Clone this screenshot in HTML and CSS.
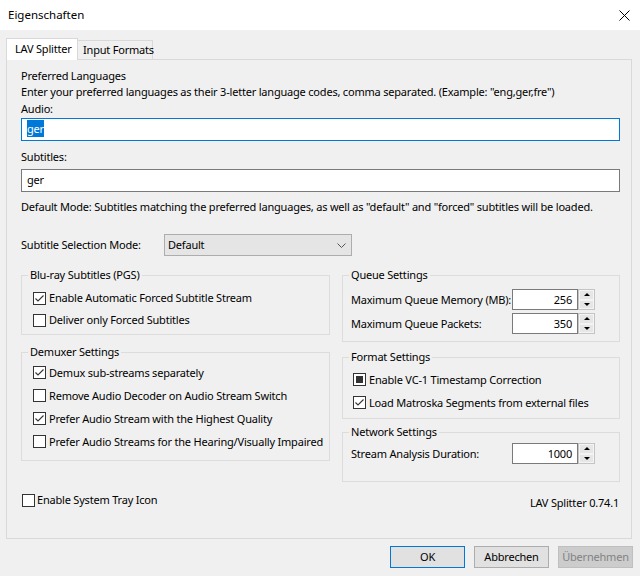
FILE: index.html
```html
<!DOCTYPE html>
<html>
<head>
<meta charset="utf-8">
<title>Eigenschaften</title>
<link rel="stylesheet" href="styles.css">
</head>
<body>
<div class="window">
  <div class="titlebar">
    <span class="title">Eigenschaften</span>
    <svg class="close" width="11" height="11" viewBox="0 0 11 11"><path d="M0.5 0.5 L10.5 10.5 M10.5 0.5 L0.5 10.5" stroke="#000" stroke-width="1" fill="none"/></svg>
  </div>
  <div class="client">
    <div class="tabs">
      <div class="tab active">LAV Splitter</div>
      <div class="tab">Input Formats</div>
    </div>
    <div class="panel">
      <div class="line">Preferred Languages</div>
      <div class="line">Enter your preferred languages as their 3-letter language codes, comma separated. (Example: "eng,ger,fre")</div>
      <div class="line lbl-audio">Audio:</div>
      <div class="edit focus"><span class="sel">ger</span></div>
      <div class="line lbl-sub">Subtitles:</div>
      <div class="edit sub">ger</div>
      <div class="line note">Default Mode: Subtitles matching the preferred languages, as well as "default" and "forced" subtitles will be loaded.</div>
      <div class="mode-row">
        <span class="mode-label">Subtitle Selection Mode:</span>
        <div class="combo"><span>Default</span><svg class="chev" width="9" height="5" viewBox="0 0 9 5"><path d="M0.5 0.5 L4.5 4.5 L8.5 0.5" stroke="#555" stroke-width="1" fill="none"/></svg></div>
      </div>
      <div class="columns">
        <div class="col">
          <fieldset class="group bluray">
            <legend>Blu-ray Subtitles (PGS)</legend>
            <div class="check"><span class="box"><svg width="11" height="11" viewBox="0 0 11 11"><path d="M1.5 5.5 L4 8 L9.5 2.5" stroke="#333" stroke-width="1.1" fill="none"/></svg></span>Enable Automatic Forced Subtitle Stream</div>
            <div class="check"><span class="box"></span>Deliver only Forced Subtitles</div>
          </fieldset>
          <fieldset class="group demux">
            <legend>Demuxer Settings</legend>
            <div class="check"><span class="box"><svg width="11" height="11" viewBox="0 0 11 11"><path d="M1.5 5.5 L4 8 L9.5 2.5" stroke="#333" stroke-width="1.1" fill="none"/></svg></span>Demux sub-streams separately</div>
            <div class="check"><span class="box"></span>Remove Audio Decoder on Audio Stream Switch</div>
            <div class="check"><span class="box"><svg width="11" height="11" viewBox="0 0 11 11"><path d="M1.5 5.5 L4 8 L9.5 2.5" stroke="#333" stroke-width="1.1" fill="none"/></svg></span>Prefer Audio Stream with the Highest Quality</div>
            <div class="check"><span class="box"></span>Prefer Audio Streams for the Hearing/Visually Impaired</div>
          </fieldset>
        </div>
        <div class="col">
          <fieldset class="group queue">
            <legend>Queue Settings</legend>
            <div class="field"><span>Maximum Queue Memory (MB):</span><div class="spin"><div class="spin-edit">256</div><div class="spin-btns"><span class="half"><i class="up"></i></span><span class="half"><i class="down"></i></span></div></div></div>
            <div class="field"><span>Maximum Queue Packets:</span><div class="spin"><div class="spin-edit">350</div><div class="spin-btns"><span class="half"><i class="up"></i></span><span class="half"><i class="down"></i></span></div></div></div>
          </fieldset>
          <fieldset class="group format">
            <legend>Format Settings</legend>
            <div class="check"><span class="box"><span class="ind"></span></span>Enable VC-1 Timestamp Correction</div>
            <div class="check"><span class="box"><svg width="11" height="11" viewBox="0 0 11 11"><path d="M1.5 5.5 L4 8 L9.5 2.5" stroke="#333" stroke-width="1.1" fill="none"/></svg></span>Load Matroska Segments from external files</div>
          </fieldset>
          <fieldset class="group network">
            <legend>Network Settings</legend>
            <div class="field"><span>Stream Analysis Duration:</span><div class="spin"><div class="spin-edit">1000</div><div class="spin-btns"><span class="half"><i class="up"></i></span><span class="half"><i class="down"></i></span></div></div></div>
          </fieldset>
        </div>
      </div>
      <div class="footer-row">
        <div class="check tray"><span class="box"></span>Enable System Tray Icon</div>
        <span class="version">LAV Splitter 0.74.1</span>
      </div>
    </div>
    <div class="buttons">
      <div class="btn default">OK</div>
      <div class="btn">Abbrechen</div>
      <div class="btn disabled">Übernehmen</div>
    </div>
  </div>
</div>
</body>
</html>
```
FILE: styles.css
```css
html, body {
  margin: 0;
  padding: 0;
  background: #f0f0f0;
}
.window {
  width: 640px;
  height: 576px;
  font-family: "Noto Sans", sans-serif;
  font-size: 11px;
  letter-spacing: -0.2px;
  line-height: 16px;
  color: #000;
  overflow: hidden;
}
.titlebar {
  height: 30px;
  background: #fff;
  display: flex;
  align-items: center;
  padding-left: 8px;
  font-size: 11.5px;
  letter-spacing: 0;
}
.titlebar .close {
  margin-left: auto;
  margin-right: 10px;
}
.client {
  background: #f0f0f0;
  height: 546px;
}
.tabs {
  height: 29px;
  padding-left: 6px;
  display: flex;
  align-items: flex-end;
  box-sizing: border-box;
}
.tab {
  box-sizing: border-box;
  border: 1px solid #d9d9d9;
  border-bottom: none;
  white-space: nowrap;
}
.tab.active {
  position: relative;
  z-index: 1;
  width: 72px;
  height: 22px;
  margin-bottom: -1px;
  background: #fff;
  padding-left: 8px;
  line-height: 20px;
}
.tab:not(.active) {
  width: 75px;
  height: 19px;
  border-left: none;
  padding-left: 5px;
  line-height: 18px;
  background: #f0f0f0;
}
.panel {
  box-sizing: border-box;
  margin-left: 6px;
  margin-right: 8px;
  height: 480px;
  border: 1px solid #d9d9d9;
  background: #f0f0f0;
  padding: 8px 11px 0 14px;
  display: flex;
  flex-direction: column;
}
.line {
  height: 16px;
  white-space: nowrap;
}
.lbl-audio { margin-top: 1px; }
.edit {
  box-sizing: border-box;
  height: 23px;
  margin-top: 1px;
  background: #fff;
  border: 1px solid #7a7a7a;
  padding-left: 5px;
  line-height: 20px;
}
.edit.focus {
  border-color: #0078d7;
}
.sel {
  background: #0078d7;
  color: #fff;
  padding: 1px 0;
}
.lbl-sub { margin-top: 8px; }
.edit.sub { margin-top: 4px; }
.note { margin-top: 7px; }
.mode-row {
  margin-top: 19px;
  height: 22px;
  display: flex;
  align-items: center;
}
.mode-label {
  width: 143px;
}
.combo {
  box-sizing: border-box;
  width: 188px;
  height: 22px;
  background: #e5e5e5;
  border: 1px solid #adadad;
  display: flex;
  align-items: center;
  padding-left: 3px;
}
.chev {
  margin-left: auto;
  margin-right: 5px;
}
.columns {
  margin-top: 11px;
  display: grid;
  grid-template-columns: 309px 278px;
  column-gap: 12px;
  align-items: start;
}
.col {
  display: flex;
  flex-direction: column;
}
.group {
  margin: 0;
  min-width: 0;
  border: 1px solid #dcdcdc;
  padding: 0;
}
.group legend {
  margin-left: 6px;
  padding: 0 2px;
  line-height: 16px;
}
.check {
  display: flex;
  align-items: center;
  gap: 3px;
  white-space: nowrap;
}
.box {
  box-sizing: border-box;
  width: 13px;
  height: 13px;
  border: 1px solid #333;
  background: #fff;
  display: flex;
  align-items: center;
  justify-content: center;
  flex: none;
}
.box svg { display: block; }
.ind {
  width: 7px;
  height: 7px;
  background: #333;
}
.bluray {
  padding: 4px 0 3px 0;
}
.bluray .check { height: 22px; margin-left: 11px; }
.demux {
  margin-top: 9px;
  padding: 1px 0 7px 0;
}
.demux .check { height: 23px; margin-left: 11px; }
.field {
  display: flex;
  align-items: center;
  justify-content: space-between;
  height: 21px;
  white-space: nowrap;
  margin: 0 24px 0 8px;
}
.queue {
  padding: 6px 0 7px 0;
}
.queue .field + .field { margin-top: 3px; }
.format {
  margin-top: 7px;
  padding: 3px 0 4px 0;
}
.format .check { height: 23px; margin-left: 10px; }
.network {
  margin-top: 5px;
  padding: 3px 0 17px 0;
}
.spin {
  display: flex;
  height: 21px;
}
.spin-edit {
  box-sizing: border-box;
  width: 66px;
  height: 21px;
  background: #fff;
  border: 1px solid #7a7a7a;
  text-align: right;
  padding-right: 5px;
  line-height: 19px;
}
.spin-btns {
  box-sizing: border-box;
  width: 17px;
  height: 21px;
  display: flex;
  flex-direction: column;
  border: 1px solid #c4c4c4;
  background: #fff;
}
.half {
  flex: 1;
  display: flex;
  align-items: center;
  justify-content: center;
  background: #e6e6e6;
  border: 1px solid #f4f4f4;
}
.up {
  width: 0;
  height: 0;
  border-left: 3px solid transparent;
  border-right: 3px solid transparent;
  border-bottom: 3px solid #000;
}
.down {
  width: 0;
  height: 0;
  border-left: 3px solid transparent;
  border-right: 3px solid transparent;
  border-top: 3px solid #000;
}
.footer-row {
  margin-top: 10px;
  display: flex;
  justify-content: space-between;
  align-items: flex-start;
}
.tray {
  height: 16px;
  margin-left: 1px;
  gap: 2px;
}
.version {
  padding-top: 3px;
  margin-right: 1px;
}
.buttons {
  margin-top: 7px;
  display: flex;
  justify-content: flex-end;
  gap: 9px;
  padding-right: 7px;
}
.btn {
  box-sizing: border-box;
  width: 75px;
  height: 22px;
  background: #e1e1e1;
  border: 1px solid #adadad;
  text-align: center;
  line-height: 20px;
}
.btn.default {
  border-color: #0078d7;
}
.btn.disabled {
  background: #cccccc;
  border-color: #bfbfbf;
  color: #838383;
}
```
